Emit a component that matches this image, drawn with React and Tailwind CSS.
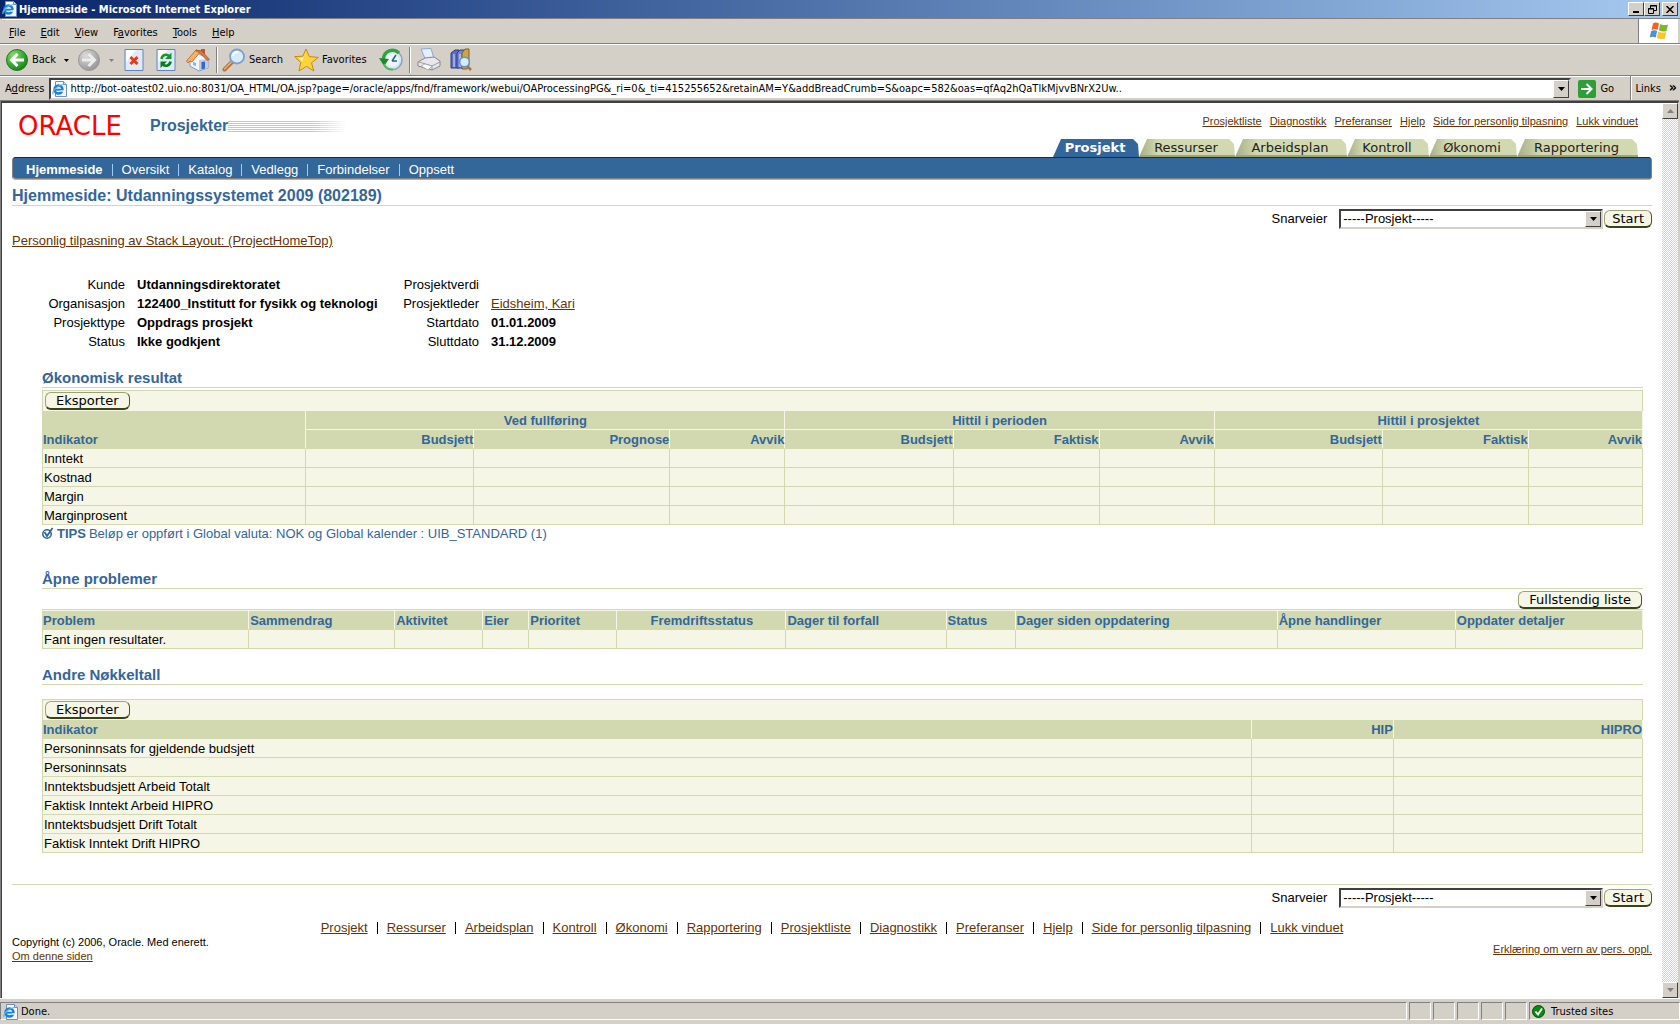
import React, { useState } from "react";

const menuItems = [
  ["", "F", "ile"],
  ["", "E", "dit"],
  ["", "V", "iew"],
  ["F", "a", "vorites"],
  ["", "T", "ools"],
  ["", "H", "elp"],
];

const globalLinks = ["Prosjektliste", "Diagnostikk", "Preferanser", "Hjelp", "Side for personlig tilpasning", "Lukk vinduet"];

const tabs = [
  { label: "Prosjekt", width: "w-[86px]" },
  { label: "Ressurser", width: "w-[96px]" },
  { label: "Arbeidsplan", width: "w-[112px]" },
  { label: "Kontroll", width: "w-[82px]" },
  { label: "Økonomi", width: "w-[88px]" },
  { label: "Rapportering", width: "w-[121px]" },
];

const subTabs = ["Hjemmeside", "Oversikt", "Katalog", "Vedlegg", "Forbindelser", "Oppsett"];

const facts = [
  ["Kunde", "Utdanningsdirektoratet", "Prosjektverdi", ""],
  ["Organisasjon", "122400_Institutt for fysikk og teknologi", "Prosjektleder", "Eidsheim, Kari"],
  ["Prosjekttype", "Oppdrags prosjekt", "Startdato", "01.01.2009"],
  ["Status", "Ikke godkjent", "Sluttdato", "31.12.2009"],
];

const resultGroups = ["Ved fullføring", "Hittil i perioden", "Hittil i prosjektet"];
const resultColumns = ["Budsjett", "Prognose", "Avvik", "Budsjett", "Faktisk", "Avvik", "Budsjett", "Faktisk", "Avvik"];
const resultRows = ["Inntekt", "Kostnad", "Margin", "Marginprosent"];
const resultWidths = ["w-[263px]", "w-[168px]", "w-[196px]", "w-[115px]", "w-[168px]", "w-[146px]", "w-[115px]", "w-[168px]", "w-[146px]", "w-[114px]"];

const problemColumns = [
  { label: "Problem", width: "w-[206px]" },
  { label: "Sammendrag", width: "w-[146px]" },
  { label: "Aktivitet", width: "w-[88px]" },
  { label: "Eier", width: "w-[46px]" },
  { label: "Prioritet", width: "w-[88px]" },
  { label: "Fremdriftsstatus", width: "w-[169px]", center: true },
  { label: "Dager til forfall", width: "w-[160px]" },
  { label: "Status", width: "w-[69px]" },
  { label: "Dager siden oppdatering", width: "w-[262px]" },
  { label: "Åpne handlinger", width: "w-[178px]" },
  { label: "Oppdater detaljer", width: "w-[187px]" },
];

const keyFigures = [
  "Personinnsats for gjeldende budsjett",
  "Personinnsats",
  "Inntektsbudsjett Arbeid Totalt",
  "Faktisk Inntekt Arbeid HIPRO",
  "Inntektsbudsjett Drift Totalt",
  "Faktisk Inntekt Drift HIPRO",
];

const footerLinks = [...tabs.map((tab) => tab.label), ...globalLinks];

const url =
  "http://bot-oatest02.uio.no:8031/OA_HTML/OA.jsp?page=/oracle/apps/fnd/framework/webui/OAProcessingPG&_ri=0&_ti=415255652&retainAM=Y&addBreadCrumb=S&oapc=582&oas=qfAq2hQaTlkMjvvBNrX2Uw..";

/* ---------- icons ---------- */

const PageIcon = () => (
  <svg width="16" height="16" viewBox="0 0 16 16" className="shrink-0" aria-hidden="true">
    <path d="M3.5 .5h8l3 3v12h-11z" fill="#f4f8ff" stroke="#6f8fc4" />
    <path d="M11.5 .5v3h3" fill="#cfdcf5" stroke="#6f8fc4" />
    <circle cx="6.5" cy="8.5" r="4" fill="#d9eefc" stroke="#1b7fd6" strokeWidth="2.4" />
    <path d="M3 8.7h7.5" stroke="#1b7fd6" strokeWidth="1.8" />
    <path d="M8.5 10h3.500" stroke="#f4f8ff" strokeWidth="1.4" />
    <path d="M1 13C0 10 5 4.500 11 3.500" fill="none" stroke="#58b4f2" strokeWidth="1.200" />
  </svg>
);

const ArrowCircle = ({ back }) => (
  <svg width="24" height="24" viewBox="0 0 24 24" aria-hidden="true">
    <defs>
      <radialGradient id={back ? "goBack" : "goForward"} cx=".35" cy=".3" r=".8">
        <stop offset="0" stopColor={back ? "#8ede7c" : "#dcdcdc"} />
        <stop offset=".55" stopColor={back ? "#3bab33" : "#b2b2b2"} />
        <stop offset="1" stopColor={back ? "#14761a" : "#8f8f8f"} />
      </radialGradient>
    </defs>
    <circle cx="12" cy="12" r="10.500" fill={back ? "url(#goBack)" : "url(#goForward)"} stroke={back ? "#1f7d22" : "#999"} />
    {back ? (
      <path d="M19 12H7M12.500 6L6.500 12l6 6" fill="none" stroke="#fff" strokeWidth="3" />
    ) : (
      <path d="M5 12h12M11.500 6l6 6-6 6" fill="none" stroke="#ececec" strokeWidth="3" />
    )}
  </svg>
);

const Caret = ({ className = "" }) => (
  <svg width="7" height="4" viewBox="0 0 7 4" className={className} fill="currentColor" aria-hidden="true">
    <path d="M0 0h7L3.500 4z" />
  </svg>
);

const SmallCaret = ({ className = "" }) => (
  <svg width="5" height="3" viewBox="0 0 5 3" className={className} fill="currentColor" aria-hidden="true">
    <path d="M0 0h5L2.500 3z" />
  </svg>
);

const StopIcon = () => (
  <svg width="20" height="24" viewBox="0 0 20 24" aria-hidden="true">
    <path d="M1 1.500h18v21H1z" fill="#dfeafb" stroke="#5d86c9" />
    <path d="M2 2h10L2 14z" fill="#fff" />
    <path d="M6.500 9l7 7M13.500 9l-7 7" stroke="#ee3b11" strokeWidth="3" />
  </svg>
);

const RefreshIcon = () => (
  <svg width="20" height="24" viewBox="0 0 20 24" aria-hidden="true">
    <path d="M1 1.500h18v21H1z" fill="#dfeafb" stroke="#5d86c9" />
    <path d="M2 2h10L2 14z" fill="#fff" />
    <path d="M5.500 11c.5-4 5-5.500 7.500-3" fill="none" stroke="#149a22" strokeWidth="2.600" />
    <path d="M15.500 4.500v6.500H9z" fill="#149a22" />
    <path d="M14.500 13.500c-.5 4-5 5.500-7.500 3" fill="none" stroke="#0b7a18" strokeWidth="2.600" />
    <path d="M4.500 20v-6.500H11z" fill="#0b7a18" />
  </svg>
);

const HomeIcon = () => (
  <svg width="24" height="24" viewBox="0 0 24 24" aria-hidden="true">
    <path d="M15 1h4v7h-4z" fill="#b85a30" />
    <path d="M4 11l7-6 8 4 3 3v8l-9 3-9-5z" fill="#f3f6fe" stroke="#7f9bd0" />
    <path d="M13 22.500V12l9-1v9z" fill="#b9ccf0" />
    <path d="M.5 13L10 2l5 1-9 11-2-1-2 2z" fill="#f7b261" stroke="#b9622b" strokeWidth=".8" />
    <path d="M10 2l6 1 7.500 8.500-2.500 1L14 5l-4-2z" fill="#d97a3a" stroke="#a65124" strokeWidth=".6" />
    <path d="M15.500 14l3.500-.5v7l-3.500 1z" fill="#3c67b5" />
    <path d="M7 14l3 1v3l-3-1z" fill="#7fb2ef" />
  </svg>
);

const SearchIcon = () => (
  <svg width="24" height="24" viewBox="0 0 24 24" aria-hidden="true">
    <path d="M10 14l-7.500 7.500" stroke="#b0703a" strokeWidth="4" strokeLinecap="round" />
    <path d="M9.500 14L2.500 21" stroke="#edb56f" strokeWidth="1.500" strokeLinecap="round" />
    <circle cx="15" cy="8.500" r="7" fill="#d6ecfd" stroke="#7c9fd6" strokeWidth="1.800" />
    <path d="M11 8c0-3 3-4.500 5-4" fill="none" stroke="#fff" strokeWidth="2" />
  </svg>
);

const StarIcon = () => (
  <svg width="25" height="24" viewBox="0 0 25 24" aria-hidden="true">
    <path d="M12 1l3.300 7.600 9 .8-6.800 5.400 2.300 8.200-7.300-4.600L5 23l1.700-8.500L.8 8.600l8-.4z" fill="#fdd33c" stroke="#c48a12" />
    <path d="M12 4l-2.300 5.500-5.500.4 4 3.600z" fill="#fff3a8" />
  </svg>
);

const HistoryIcon = () => (
  <svg width="24" height="24" viewBox="0 0 24 24" aria-hidden="true">
    <circle cx="13.500" cy="12" r="9.500" fill="#d8e9f6" stroke="#8aa5bc" strokeWidth="1.600" />
    <circle cx="13.500" cy="12" r="6.500" fill="#eef6fc" />
    <path d="M13 13l4-6M13 13h5" fill="none" stroke="#2d5d94" strokeWidth="1.500" />
    <path d="M20 5C14-.5 5 3 4.500 11" fill="none" stroke="#2fa53d" strokeWidth="3.400" />
    <path d="M0 10l10 1-5 7z" fill="#1c8a2b" />
    <path d="M5 16c1 4 5 6 9 5.500" fill="none" stroke="#54b35e" strokeWidth="2" />
  </svg>
);

const PrintIcon = () => (
  <svg width="24" height="24" viewBox="0 0 24 24" aria-hidden="true">
    <path d="M4 1l10-.5 3 10H8z" fill="#e4eefd" stroke="#8ea7d6" />
    <path d="M1 14l7-4 9-1 6 4v5l-8 4-14-4z" fill="#e8e8ec" stroke="#85858d" />
    <path d="M2 14l13 4 8-4M15 18v4" fill="none" stroke="#9a9aa3" />
    <path d="M4 18l4-2 7 2-4 4z" fill="#fff" stroke="#999" strokeWidth=".7" />
  </svg>
);

const ResearchIcon = () => (
  <svg width="24" height="24" viewBox="0 0 24 24" aria-hidden="true">
    <path d="M2 5l4-3h4v18H2z" fill="#5a6fc0" stroke="#2e3d86" />
    <path d="M8 5l3-3h4v18H8z" fill="#7487d0" stroke="#2e3d86" />
    <path d="M13 5l3-4h4v16l-2 4h-5z" fill="#c9a64a" stroke="#7c6220" />
    <path d="M5 6v13M11 6v13" stroke="#dfe4f8" />
    <path d="M18 18l4 4" stroke="#b0703a" strokeWidth="2.500" />
    <circle cx="15.500" cy="14" r="4.800" fill="#d5ebfc" stroke="#6c8fc8" strokeWidth="1.500" />
  </svg>
);

const WindowsFlag = () => (
  <svg width="20" height="18" viewBox="0 0 20 18" aria-hidden="true">
    <path d="M4 1.500c2-1.500 4-1 6 0L8.500 8c-2-1-4-1-6 0z" fill="#f0612c" />
    <path d="M11 2c2 1 5 1.500 8 .5L17.500 9c-3 1-5 .5-7.500-.5z" fill="#7ab82e" />
    <path d="M2.200 9c2-1 4-1 6 0l-1.500 6.500c-2-1-4-1-6 0z" fill="#4a8ee0" />
    <path d="M9.300 9.500c2 1 5 1.500 8 .5l-1.500 6.500c-3 1-5.500.5-8-.5z" fill="#fbc62c" />
  </svg>
);

const TipIcon = () => (
  <svg width="12" height="14" viewBox="0 0 12 14" aria-hidden="true">
    <circle cx="5" cy="7" r="4.200" fill="#fff" stroke="#336699" strokeWidth="1.500" />
    <path d="M2.500 5l2.500 4L10.500 1" fill="none" stroke="#336699" strokeWidth="1.800" />
  </svg>
);

/* ---------- browser chrome ---------- */

const raised = "border border-t-white border-l-white border-r-[#404040] border-b-[#404040] bg-[#d4d0c8]";
const sunken = "border border-t-[#808080] border-l-[#808080] border-r-white border-b-white";

const TitleBar = () => (
  <header className="flex h-[18px] items-center bg-linear-to-r from-[#0a246a] to-[#a6caf0] pl-0.5 pr-0.5">
    <PageIcon />
    <h1 className="pt-px pl-px text-[11px] leading-4 font-bold text-white">Hjemmeside - Microsoft Internet Explorer</h1>
    <div className="ml-auto flex">
      <button aria-label="Minimize" className={`flex h-[14px] w-4 items-end justify-center pb-0.5 ${raised}`}>
        <span className="h-0.5 w-1.5 bg-black" />
      </button>
      <button aria-label="Restore" className={`flex h-[14px] w-4 items-center justify-center ${raised}`}>
        <svg width="9" height="9" viewBox="0 0 9 9" fill="none" stroke="#000" aria-hidden="true">
          <path d="M2.500 3V.5h6v5H6M2 1h7M.5 3.500h5v5h-5zM0 4h6" />
        </svg>
      </button>
      <button aria-label="Close" className={`ml-0.5 flex h-[14px] w-4 items-center justify-center ${raised}`}>
        <svg width="8" height="7" viewBox="0 0 8 7" stroke="#000" strokeWidth="1.500" aria-hidden="true">
          <path d="M.5 0l7 7M7.500 0l-7 7" />
        </svg>
      </button>
    </div>
  </header>
);

const MenuBar = () => (
  <nav className="flex h-[26px] items-stretch border-t border-b border-t-[#808080] border-b-[#808080] pl-0.5 pr-0.5">
    <div className="flex items-center gap-[15px] border-t border-white pt-0.5 pl-[7px]">
      {menuItems.map(([before, key, after]) => (
        <button key={before + key + after}>
          {before}
          <span className="underline">{key}</span>
          {after}
        </button>
      ))}
    </div>
    <div className="ml-auto flex w-10 items-center justify-center border-l border-[#808080] bg-white">
      <WindowsFlag />
    </div>
  </nav>
);

const Separator = () => <span className="h-[26px] w-0.5 border-l border-l-[#808080] bg-white" />;

const Toolbar = () => (
  <div className="flex h-8 items-center border-t border-b border-t-white border-b-[#808080] pl-[5px]">
    <button className="flex items-center gap-[3px]">
      <ArrowCircle back />
      Back
    </button>
    <SmallCaret className="ml-2" />
    <button aria-label="Forward" className="ml-2">
      <ArrowCircle />
    </button>
    <SmallCaret className="ml-2 text-[#808080]" />
    <button aria-label="Stop" className="ml-2.5"><StopIcon /></button>
    <button aria-label="Refresh" className="ml-3"><RefreshIcon /></button>
    <button aria-label="Home" className="mr-1.5 ml-2.5"><HomeIcon /></button>
    <Separator />
    <button className="ml-1 flex items-center gap-[3px]">
      <SearchIcon />
      Search
    </button>
    <button className="ml-[11px] flex items-center gap-[3px]">
      <StarIcon />
      Favorites
    </button>
    <button aria-label="History" className="mr-1.5 ml-3"><HistoryIcon /></button>
    <Separator />
    <button aria-label="Print" className="ml-1.5"><PrintIcon /></button>
    <button aria-label="Research" className="ml-2"><ResearchIcon /></button>
  </div>
);

const AddressBar = () => (
  <div className="flex h-6 items-center border-t border-t-white pr-[3px] pl-[5px]">
    <label htmlFor="address">
      A<span className="underline">d</span>dress
    </label>
    <div className="ml-[5px] flex h-[22px] min-w-0 flex-1 items-center border-2 border-t-[#404040] border-r-[#d4d0c8] border-b-[#d4d0c8] border-l-[#404040] bg-white pl-px">
      <PageIcon />
      <input id="address" defaultValue={url} className="ml-0.5 min-w-0 flex-1 bg-white outline-none" />
      <button aria-label="Show addresses" className={`flex h-[18px] w-4 items-center justify-center ${raised}`}>
        <Caret />
      </button>
    </div>
    <button className="flex w-[59px] items-center gap-1 pl-[7px]">
      <svg width="18" height="18" viewBox="0 0 18 18" aria-hidden="true">
        <rect width="18" height="18" rx="2" fill="#2f9e37" />
        <path d="M3 9h10M8.500 4l5 5-5 5" fill="none" stroke="#fff" strokeWidth="2" />
      </svg>
      Go
    </button>
    <Separator />
    <button className="ml-[3px] flex items-start gap-2">
      Links
      <span className="text-sm leading-3 font-bold">»</span>
    </button>
  </div>
);

const ScrollBar = () => (
  <div className="flex w-4 shrink-0 flex-col justify-between bg-[repeating-conic-gradient(#ffffff_0_25%,#d4d0c8_0_50%)] bg-[length:2px_2px]">
    <button aria-label="Scroll up" className={`flex h-4 items-center justify-center text-[#808080] ${raised}`}>
      <Caret className="rotate-180" />
    </button>
    <button aria-label="Scroll down" className={`flex h-4 items-center justify-center text-[#808080] ${raised}`}>
      <Caret />
    </button>
  </div>
);

const StatusBar = () => (
  <footer className="flex h-[26px] items-start gap-0.5 border-t border-white pt-[3px]">
    <div className={`flex h-[18px] flex-1 items-center gap-0.5 pt-px pl-0.5 ${sunken}`}>
      <PageIcon />
      Done.
    </div>
    {[1, 2, 3, 4, 5].map((pane) => (
      <span key={pane} className={`h-[18px] w-[22px] ${sunken}`} />
    ))}
    <div className={`flex h-[18px] w-[151px] items-center gap-1.5 pt-px pl-0.5 ${sunken}`}>
      <svg width="13" height="13" viewBox="0 0 13 13" aria-hidden="true">
        <circle cx="6.500" cy="6.500" r="6" fill="#0b8a12" stroke="#064d09" />
        <path d="M3.500 6.500l2.500 3 4-6" fill="none" stroke="#fff" strokeWidth="1.800" />
      </svg>
      Trusted sites
    </div>
  </footer>
);

/* ---------- page ---------- */

const link = "text-[#663300] underline";

const PillButton = ({ wide, children }) => (
  <button
    className={`h-[18px] rounded-[6px] border border-t-[#9ca376] border-r-[#4a5229] border-b-2 border-l-[#9ca376] border-b-[#3a4218] bg-[#f5f6e6] font-['DejaVu_Sans'] text-[13px] leading-[14px] text-black ${wide ? "px-2.5" : "px-[7px]"}`}
  >
    {children}
  </button>
);

const Shortcuts = ({ id }) => {
  const [value, setValue] = useState("prosjekt");

  return (
    <div className="flex h-[23px] items-center justify-end pt-[3px]">
      <label htmlFor={id} className="mr-3">Snarveier</label>
      <div className="relative mr-px">
        <select
          id={id}
          value={value}
          onChange={(event) => setValue(event.target.value)}
          className="block h-5 w-[264px] appearance-none border-2 border-t-[#404040] border-r-[#d4d0c8] border-b-[#d4d0c8] border-l-[#404040] bg-white pl-0.5 leading-4"
        >
          <option value="prosjekt">-----Prosjekt-----</option>
        </select>
        <span className={`pointer-events-none absolute top-0.5 right-0.5 flex h-4 w-4 items-center justify-center ${raised}`}>
          <Caret />
        </span>
      </div>
      <PillButton>Start</PillButton>
    </div>
  );
};

const SectionTitle = ({ children }) => (
  <h3 className="h-[21px] border-b border-[#d2d8b0] pt-0.5 text-[15px] leading-[18px] font-bold text-[#336699]">{children}</h3>
);

const tableClass = "w-full table-fixed border-separate border-spacing-0 border-l border-[#d2d8b0]";
const headCell = "h-[19px] border-r border-b border-r-[#f5f6e6] border-b-[#d2d8b0] bg-[#d2d8b0] px-0 pt-0.5 pb-0 align-bottom leading-4 font-bold text-[#336699]";
const bodyCell = "h-[19px] border-r border-b border-[#d2d8b0] bg-[#f5f6e6] px-0 pt-0.5 pb-0 leading-4";
const tableBar = "flex h-[21px] items-center border border-b-0 border-[#d2d8b0] bg-[#f5f6e6] pl-0.5";

const PageHeader = () => (
  <div>
    <div className="flex h-[54px] justify-between">
      <div className="flex h-[46px] items-center pl-1.5">
        <span className="w-[132px] font-['DejaVu_Sans'] text-[26px] leading-8 text-[#ff0000]">ORACLE</span>
        <span className="text-base font-bold text-[#336699]">Prosjekter</span>
        <span className="flex w-[119px] flex-col gap-px">
          {[1, 2, 3, 4, 5, 6].map((stripe) => (
            <span key={stripe} className="h-px bg-linear-to-r from-[#cccc99] from-70% to-white" />
          ))}
        </span>
      </div>
      <div className="flex flex-col items-end justify-between pt-[11px] pr-3.5">
        <div className="flex gap-2 text-[11px] leading-[14px]">
          {globalLinks.map((label) => (
            <a key={label} href="#" className={link}>{label}</a>
          ))}
        </div>
        <nav className="flex font-['DejaVu_Sans']">
          {tabs.map((tab, index) => (
            <a
              key={tab.label}
              href="#"
              className={`flex h-[18px] justify-center pr-0.5 leading-[17px] [clip-path:polygon(8px_0,calc(100%-6px)_0,calc(100%-1px)_5px,100%_100%,0_100%)] ${tab.width} ${
                index === 0
                  ? "bg-[#336699] font-bold text-white"
                  : "border-b-2 border-[#9ca376] bg-linear-to-r from-[#a8ae85] to-[#d2d8b0] to-20% text-[#222]"
              }`}
            >
              {tab.label}
            </a>
          ))}
        </nav>
      </div>
    </div>
    <nav className="mr-px mb-0.5 ml-px flex h-[21px] items-center rounded-[2px] border-t border-[#003366] bg-[#336699] pt-1 pb-px pl-[13px] text-white shadow-[1px_1px_0_#808080,0_2px_0_#b0b0b0,-1px_1px_0_#808080]">
      {subTabs.map((label, index) => (
        <React.Fragment key={label}>
          {index > 0 && <span className="mx-[9px] h-3 w-px bg-[#99ccff]" />}
          <a href="#" className={index === 0 ? "font-bold" : ""}>{label}</a>
        </React.Fragment>
      ))}
    </nav>
  </div>
);

const Facts = () => (
  <table className="mt-6">
    <tbody>
      {facts.map(([label, value, label2, value2]) => (
        <tr key={label} className="h-[19px] leading-[19px]">
          <th scope="row" className="w-[113px] p-0 text-right font-normal">{label}</th>
          <td className="w-[266px] p-0 pl-3 font-bold">{value}</td>
          <th scope="row" className="w-[88px] p-0 text-right font-normal">{label2}</th>
          <td className="p-0 pl-3 font-bold">
            {label2 === "Prosjektleder" ? <a href="#" className={`font-normal ${link}`}>{value2}</a> : value2}
          </td>
        </tr>
      ))}
    </tbody>
  </table>
);

const Results = () => (
  <section className="mt-4">
    <SectionTitle>Økonomisk resultat</SectionTitle>
    <div className={`mt-0.5 ${tableBar}`}>
      <PillButton wide>Eksporter</PillButton>
    </div>
    <table className={tableClass}>
      <colgroup>
        {resultWidths.map((width, index) => (
          <col key={index} className={width} />
        ))}
      </colgroup>
      <thead>
        <tr>
          <th rowSpan={2} className={`${headCell} text-left`}>Indikator</th>
          {resultGroups.map((group) => (
            <th key={group} colSpan={3} className={`${headCell} border-b-[#f5f6e6] text-center`}>{group}</th>
          ))}
        </tr>
        <tr>
          {resultColumns.map((column, index) => (
            <th key={index} className={`${headCell} text-right`}>{column}</th>
          ))}
        </tr>
      </thead>
      <tbody>
        {resultRows.map((row) => (
          <tr key={row}>
            <td className={`${bodyCell} pl-px`}>{row}</td>
            {resultColumns.map((_, index) => (
              <td key={index} className={bodyCell} />
            ))}
          </tr>
        ))}
      </tbody>
    </table>
    <p className="flex h-[17px] items-center gap-[3px] text-[#336699]">
      <TipIcon />
      <strong>TIPS</strong>
      Beløp er oppført i Global valuta: NOK og Global kalender : UIB_STANDARD (1)
    </p>
  </section>
);

const Problems = () => (
  <section className="mt-[26px]">
    <SectionTitle>Åpne problemer</SectionTitle>
    <div className="flex justify-end pt-0.5 pr-px">
      <PillButton wide>Fullstendig liste</PillButton>
    </div>
    <div className="border-t border-[#d2d8b0] bg-[#f5f6e6] pt-px">
      <table className={tableClass}>
        <colgroup>
          {problemColumns.map((column) => (
            <col key={column.label} className={column.width} />
          ))}
        </colgroup>
        <thead>
          <tr>
            {problemColumns.map((column, index) => (
              <th key={column.label} className={`${headCell} ${column.center ? "text-center" : "text-left"} ${index > 0 ? "pl-px" : ""}`}>
                {column.label}
              </th>
            ))}
          </tr>
        </thead>
        <tbody>
          <tr>
            {problemColumns.map((column, index) => (
              <td key={column.label} className={`${bodyCell} pl-px`}>{index === 0 && "Fant ingen resultater."}</td>
            ))}
          </tr>
        </tbody>
      </table>
    </div>
  </section>
);

const KeyFigures = () => (
  <section className="mt-[15px]">
    <SectionTitle>Andre Nøkkeltall</SectionTitle>
    <div className={`mt-3.5 ${tableBar}`}>
      <PillButton wide>Eksporter</PillButton>
    </div>
    <table className={tableClass}>
      <colgroup>
        <col className="w-[1208px]" />
        <col className="w-[142px]" />
        <col className="w-[249px]" />
      </colgroup>
      <thead>
        <tr>
          <th className={`${headCell} text-left`}>Indikator</th>
          <th className={`${headCell} text-right`}>HIP</th>
          <th className={`${headCell} text-right`}>HIPRO</th>
        </tr>
      </thead>
      <tbody>
        {keyFigures.map((row) => (
          <tr key={row}>
            <td className={`${bodyCell} pl-px`}>{row}</td>
            <td className={bodyCell} />
            <td className={bodyCell} />
          </tr>
        ))}
      </tbody>
    </table>
  </section>
);

const PageFooter = () => (
  <div className="mt-[31px] border-t border-[#d2d8b0]">
    <Shortcuts id="shortcuts-bottom" />
    <div className="mt-3 flex h-[15px] items-center justify-center gap-[9px]">
      {footerLinks.map((label, index) => (
        <React.Fragment key={label}>
          {index > 0 && <span className="h-3 w-px bg-black" />}
          <a href="#" className={link}>{label}</a>
        </React.Fragment>
      ))}
    </div>
    <div className="flex items-center justify-between text-[11px] leading-[14px]">
      <div>
        <p>Copyright (c) 2006, Oracle. Med enerett.</p>
        <a href="#" className={`block ${link}`}>Om denne siden</a>
      </div>
      <a href="#" className={link}>Erklæring om vern av pers. oppl.</a>
    </div>
  </div>
);

const App = () => (
  <div className="flex min-h-screen flex-col bg-[#d4d0c8] font-['DejaVu_Sans_Condensed','DejaVu_Sans',sans-serif] text-[11px] leading-4 text-black">
    <TitleBar />
    <MenuBar />
    <Toolbar />
    <AddressBar />
    <div className="mr-px flex flex-1 border-t border-l border-[#808080]">
      <div className="flex flex-1 border-t-2 border-l border-r border-t-[#404040] border-r-[#d4d0c8] border-l-[#404040] bg-white">
        <main className="min-w-0 flex-1 pr-2.5 pl-2.5 font-['Liberation_Sans',Arial,sans-serif] text-[13px] leading-4">
          <PageHeader />
          <h2 className="border-b border-[#d2d8b0] pt-[7px] text-base leading-[18px] font-bold text-[#336699]">
            Hjemmeside: Utdanningssystemet 2009 (802189)
          </h2>
          <Shortcuts id="shortcuts-top" />
          <a href="#" className={`mt-0.5 block w-fit leading-5 ${link}`}>
            Personlig tilpasning av Stack Layout: (ProjectHomeTop)
          </a>
          <Facts />
          <div className="mr-[9px] ml-[30px]">
            <Results />
            <Problems />
            <KeyFigures />
          </div>
          <PageFooter />
        </main>
        <ScrollBar />
      </div>
    </div>
    <StatusBar />
  </div>
);

export default App;
